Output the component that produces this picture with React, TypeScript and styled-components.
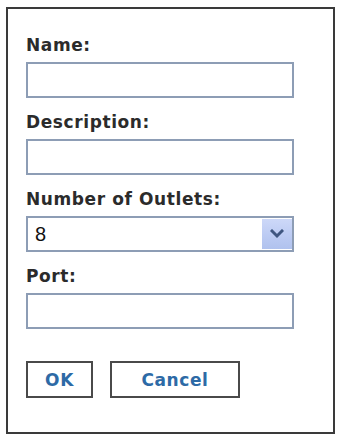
import React from "react";
import styled, { createGlobalStyle } from "styled-components";

const Global = createGlobalStyle`
  html, body { margin: 0; padding: 0; background: #ffffff; }
  body { font-family: "DejaVu Sans", Verdana, sans-serif; }
  * { box-sizing: border-box; }
`;

const Page = styled.div`
  padding: 7px 0 0 6px;
`;

const Dialog = styled.form`
  width: 329px;
  height: 427px;
  border: 2px solid #3a3a3a;
  background: #ffffff;
  padding: 28px 0 0 18px;
  display: flex;
  flex-direction: column;
`;

const Field = styled.div`
  display: flex;
  flex-direction: column;
  gap: 8px;
  margin-bottom: 16px;
`;

const Label = styled.label`
  display: block;
  font-family: "DejaVu Sans", Verdana, sans-serif;
  font-weight: bold;
  font-size: 17px;
  line-height: 17px;
  letter-spacing: 0.6px;
  color: #2b2b2b;
`;

const TextInput = styled.input`
  width: 268px;
  height: 36px;
  border: 2px solid #8d9db5;
  background: #ffffff;
  padding: 0 6px;
  font-family: "Liberation Sans", Arial, sans-serif;
  font-size: 19px;
  outline: none;
  margin: 0;
`;

const SelectBox = styled.div`
  width: 268px;
  height: 36px;
  border: 2px solid #8d9db5;
  background: #ffffff;
  display: flex;
  align-items: stretch;
`;

const SelectValue = styled.span`
  flex: 1;
  display: flex;
  align-items: center;
  padding-left: 7px;
  font-family: "Liberation Sans", Arial, sans-serif;
  font-size: 20px;
  color: #111;
`;

const ArrowButton = styled.span`
  width: 30px;
  margin: 1px 0 1px 0;
  background: linear-gradient(180deg, #cdd8f8 0%, #bccbf3 55%, #b0c2ee 100%);
  display: flex;
  align-items: center;
  justify-content: center;
`;

const Buttons = styled.div`
  display: flex;
  gap: 17px;
  margin-top: 16px;
`;

const Button = styled.button<{ $w: number }>`
  width: ${(p) => p.$w}px;
  height: 37px;
  border: 2px solid #4a4a4a;
  background: #ffffff;
  color: #2d6aa6;
  font-family: "DejaVu Sans", Verdana, sans-serif;
  font-weight: bold;
  font-size: 17px;
  letter-spacing: 0.6px;
  padding: 0;
  margin: 0;
`;

export default function App() {
  return (
    <>
      <Global />
      <Page>
        <Dialog onSubmit={(e) => e.preventDefault()}>
          <Field>
            <Label>Name:</Label>
            <TextInput type="text" />
          </Field>
          <Field>
            <Label>Description:</Label>
            <TextInput type="text" />
          </Field>
          <Field>
            <Label>Number of Outlets:</Label>
            <SelectBox>
              <SelectValue>8</SelectValue>
              <ArrowButton>
                <svg width="14" height="10" viewBox="0 0 14 10">
                  <path d="M2 2 L7 7 L12 2" fill="none" stroke="#3f5680" strokeWidth="3" strokeLinecap="square" />
                </svg>
              </ArrowButton>
            </SelectBox>
          </Field>
          <Field>
            <Label>Port:</Label>
            <TextInput type="text" />
          </Field>
          <Buttons>
            <Button type="button" $w={67}>OK</Button>
            <Button type="button" $w={130}>Cancel</Button>
          </Buttons>
        </Dialog>
      </Page>
    </>
  );
}
